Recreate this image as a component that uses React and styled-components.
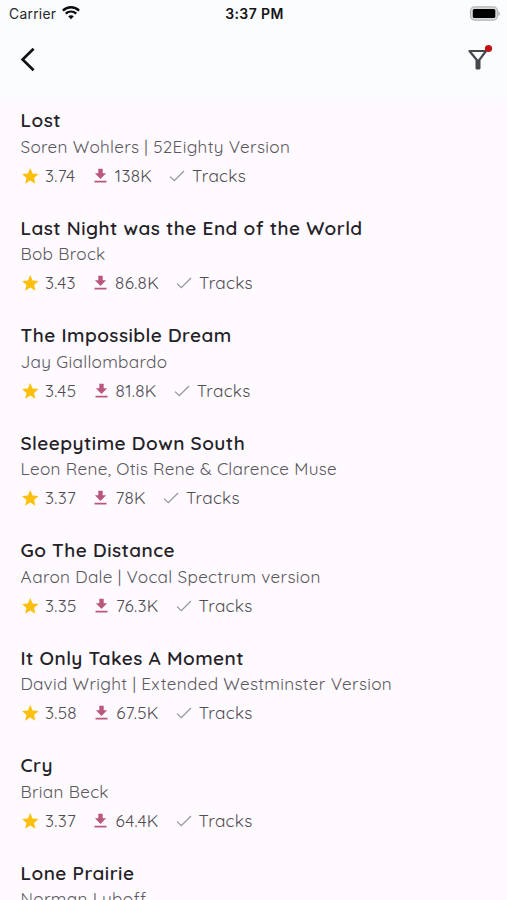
import React from 'react';
import styled, { createGlobalStyle } from 'styled-components';

const Global = createGlobalStyle`
  * { box-sizing: border-box; }
  body { margin: 0; background: #fefaff; }
`;
const Screen = styled.div`
  width: 100%;
  height: 900px;
  overflow: hidden;
  background: #fefaff;
  font-family: Quicksand, Lato, sans-serif;
`;
const Header = styled.header`
  height: 97px;
  background: #fafcfe;
`;
const StatusBar = styled.div`
  display: grid;
  grid-template-columns: 1fr auto 1fr;
  align-items: center;
  height: 27px;
  padding: 0 7px 0 9px;
  font-family: Inter, sans-serif;
  font-size: 13.8px;
  color: #28292b;
`;
const Carrier = styled.div`
  display: flex;
  align-items: center;
  gap: 5.5px;
  letter-spacing: 0.3px;
`;
const Clock = styled.div`
  font-size: 14px;
  font-weight: 600;
  letter-spacing: 0.4px;
  color: #141416;
`;
const Battery = styled.svg`
  justify-self: end;
  display: block;
`;
const NavBar = styled.nav`
  display: flex;
  justify-content: space-between;
  padding: 17px 14px 0 20px;
`;
const IconButton = styled.button`
  display: block;
  padding: 0;
  border: 0;
  background: none;
  line-height: 0;
`;
const List = styled.ul`
  margin: 0;
  padding: 11px 20.5px 0;
  list-style: none;
`;
const Song = styled.li`
  height: 107.5px;
  white-space: nowrap;
`;
const Title = styled.h2`
  margin: 0;
  font-size: 19px;
  line-height: 24px;
  font-weight: 600;
  letter-spacing: 0.46px;
  color: #242227;
`;
const Credit = styled.p`
  margin: 2.9px 0 0;
  font-size: 17.14px;
  line-height: 24px;
  letter-spacing: 0.31px;
  color: #5a585d;
`;
const Meta = styled.div`
  display: flex;
  align-items: center;
  height: 24px;
  margin-top: 5.1px;
  font-size: 17.14px;
  line-height: 24px;
  letter-spacing: 0.31px;
  color: #504e53;
`;
const Rating = styled.span`
  margin: 0 18.3px 0 6px;
`;
const Count = styled.span`
  margin: 0 17px 0 8px;
`;
const Tracks = styled.span`
  margin-left: 7px;
`;

const Wifi = () => (
  <svg width="18" height="15" viewBox="0 0 18 15" fill="none" stroke="#0c0c0d" strokeWidth="2.3">
    <path d="M.9 4.600c4.600-4.500 11.600-4.500 16.200 0M3.700 7.700c3.100-2.900 7.500-2.900 10.600 0" />
    <path d="M6.200 10.300c1.600-1.400 4-1.400 5.600 0L9 13.200z" fill="#0c0c0d" stroke="none" />
  </svg>
);
const BatteryIcon = () => (
  <Battery width="31" height="16" viewBox="0 0 31 16">
    <rect x="1.500" y=".9" width="27" height="13.200" rx="4" fill="#dadbdc" stroke="#b2b3b4" strokeWidth="1.100" />
    <rect x="3.800" y="3.100" width="22.500" height="8.800" rx="1.500" fill="#000" />
    <path d="M29.300 5.200c2.200.8 2.200 3.900 0 4.700z" fill="#b2b3b4" />
  </Battery>
);
const Back = () => (
  <svg width="18" height="30" viewBox="0 0 18 30" fill="none" stroke="#111214" strokeWidth="2.700">
    <path d="M13.600 4.700 2.600 15.500 13.600 26.300" />
  </svg>
);
const Filter = () => (
  <svg width="26" height="30" viewBox="0 0 26 30">
    <path d="M2.500 7h16.500l-6.600 8.800v8.500H9.600v-8.500z" fill="none" stroke="#45484c" strokeWidth="2.200" strokeLinejoin="round" />
    <path d="M9.200 15.500h3.600v9H9.200z" fill="#45484c" />
    <circle cx="21.500" cy="4.500" r="3.600" fill="#c01218" />
  </svg>
);
const Star = () => (
  <svg width="18.500" height="18" viewBox="0 0 18 18" fill="#fcbf0c">
    <path d="m9 1.100 2.300 5.400 5.900.5-4.400 3.900 1.300 5.800L9 13.600l-5.100 3.100 1.300-5.800L.8 7l5.900-.5z" />
  </svg>
);
const Download = () => (
  <svg width="13" height="16" viewBox="0 0 13 16" fill="#b9587c">
    <path d="M4.300.8h4.400v4.500h3.400l-5.600 5.600-5.600-5.600h3.400zM.5 12.800h12v1.600H.5z" />
  </svg>
);
const Check = () => (
  <svg width="16" height="14" viewBox="0 0 16 14" fill="none" stroke="#98969b" strokeWidth="1.300">
    <path d="m1 7.600 4.300 4.100L15 2" />
  </svg>
);

const songs = [
  { title: 'Lost', credit: 'Soren Wohlers | 52Eighty Version', rating: '3.74', count: '138K' },
  { title: 'Last Night was the End of the World', credit: 'Bob Brock', rating: '3.43', count: '86.8K' },
  { title: 'The Impossible Dream', credit: 'Jay Giallombardo', rating: '3.45', count: '81.8K' },
  { title: 'Sleepytime Down South', credit: 'Leon Rene, Otis Rene & Clarence Muse', rating: '3.37', count: '78K' },
  { title: 'Go The Distance', credit: 'Aaron Dale | Vocal Spectrum version', rating: '3.35', count: '76.3K' },
  { title: 'It Only Takes A Moment', credit: 'David Wright | Extended Westminster Version', rating: '3.58', count: '67.5K' },
  { title: 'Cry', credit: 'Brian Beck', rating: '3.37', count: '64.4K' },
  { title: 'Lone Prairie', credit: 'Norman Luboff' },
];

export default function App() {
  return (
    <Screen>
      <Global />
      <Header>
        <StatusBar>
          <Carrier>Carrier <Wifi /></Carrier>
          <Clock>3:37 PM</Clock>
          <BatteryIcon />
        </StatusBar>
        <NavBar>
          <IconButton aria-label="Back"><Back /></IconButton>
          <IconButton aria-label="Filter"><Filter /></IconButton>
        </NavBar>
      </Header>
      <List>
        {songs.map(s => (
          <Song key={s.title}>
            <Title>{s.title}</Title>
            <Credit>{s.credit}</Credit>
            {s.rating && (
              <Meta>
                <Star />
                <Rating>{s.rating}</Rating>
                <Download />
                <Count>{s.count}</Count>
                <Check />
                <Tracks>Tracks</Tracks>
              </Meta>
            )}
          </Song>
        ))}
      </List>
    </Screen>
  );
}
